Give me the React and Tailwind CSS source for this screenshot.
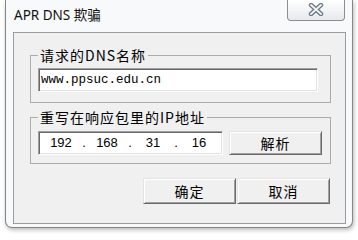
export default function App() {
  const sunken =
    "border border-t-[#a0a0a0] border-l-[#a0a0a0] border-r-white border-b-white shadow-[inset_1px_1px_0_#696969,inset_-1px_-1px_0_#e3e3e3] bg-white";
  const raised =
    "border border-t-[#e3e3e3] border-l-[#e3e3e3] border-r-[#696969] border-b-[#696969] shadow-[inset_1px_1px_0_#ffffff,inset_-1px_-1px_0_#a0a0a0] bg-[#f0f0f0] flex items-center justify-center text-[14px] tracking-[1px] text-black";
  const cjk = "font-['Noto_Sans_CJK_SC',sans-serif]";

  return (
    <div className="w-[358px] h-[240px] bg-white overflow-hidden">
      <div className="ml-[5px] w-[348px] h-[228px] bg-[#f8f9fa] border-x border-b border-[#868686] rounded-b-[7px] shadow-[1px_2px_4px_rgba(0,0,0,0.28)] flex flex-col">
        {/* title bar */}
        <div className="h-[32px] flex items-start">
          <div className="mt-[7px] ml-[8px] text-[13.5px] leading-[16px] text-[#111] font-['Noto_Sans','Noto_Sans_CJK_SC',sans-serif]">
            APR DNS 欺骗
          </div>
          <div className="ml-auto mr-[7px] w-[58px] h-[21px] border-x border-b border-[#8e8e8e] rounded-b-[4px] bg-gradient-to-b from-white to-[#e6e9ed] flex items-center justify-center">
            <svg width="16" height="13" viewBox="0 0 16 13" className="mt-[-2px]">
              <path d="M3 2 L13 11 M13 2 L3 11" stroke="#6b7585" strokeWidth="4.4" strokeLinecap="round" fill="none" />
              <path d="M3 2 L13 11 M13 2 L3 11" stroke="#eef0f3" strokeWidth="2" strokeLinecap="round" fill="none" />
            </svg>
          </div>
        </div>

        {/* client area */}
        <div className={`ml-[7px] w-[333px] h-[192px] border border-[#9c9c9c] bg-[#f0f0f0] flex flex-col ${cjk}`}>
          <fieldset className="mt-[15px] ml-[16px] w-[301px] border border-[#ababab] pl-[7px] pb-[10px]">
            <legend className="px-[2px] text-[14px] tracking-[1px] leading-[15px] text-black">
              请求的DNS名称
            </legend>
            <div className={`mt-[5px] w-[280px] h-[24px] ${sunken} flex items-center pl-[2px]`}>
              <span className="text-[12.5px] font-['Liberation_Mono',monospace] text-black">
                www.ppsuc.edu.cn
              </span>
            </div>
          </fieldset>

          <fieldset className="mt-[7px] ml-[16px] w-[301px] border border-[#ababab] pl-[7px] pb-[8px]">
            <legend className="px-[2px] text-[14px] tracking-[1px] leading-[15px] text-black">
              重写在响应包里的IP地址
            </legend>
            <div className="mt-[6px] flex gap-[6px]">
              <div className={`w-[185px] h-[24px] ${sunken} flex items-center pl-[4px] text-[13px] font-['Liberation_Sans',sans-serif] text-black`}>
                <span className="w-[36px] text-center">192</span>
                <span className="w-[10px] text-center">.</span>
                <span className="w-[36px] text-center">168</span>
                <span className="w-[10px] text-center">.</span>
                <span className="w-[36px] text-center">31</span>
                <span className="w-[10px] text-center">.</span>
                <span className="w-[36px] text-center">16</span>
              </div>
              <div className={`w-[93px] h-[24px] ${raised}`}>解析</div>
            </div>
          </fieldset>

          <div className="mt-[14px] ml-[129px] flex gap-[1px]">
            <div className={`w-[93px] h-[26px] ${raised}`}>确定</div>
            <div className={`w-[93px] h-[26px] ${raised}`}>取消</div>
          </div>
        </div>
      </div>
    </div>
  );
}
